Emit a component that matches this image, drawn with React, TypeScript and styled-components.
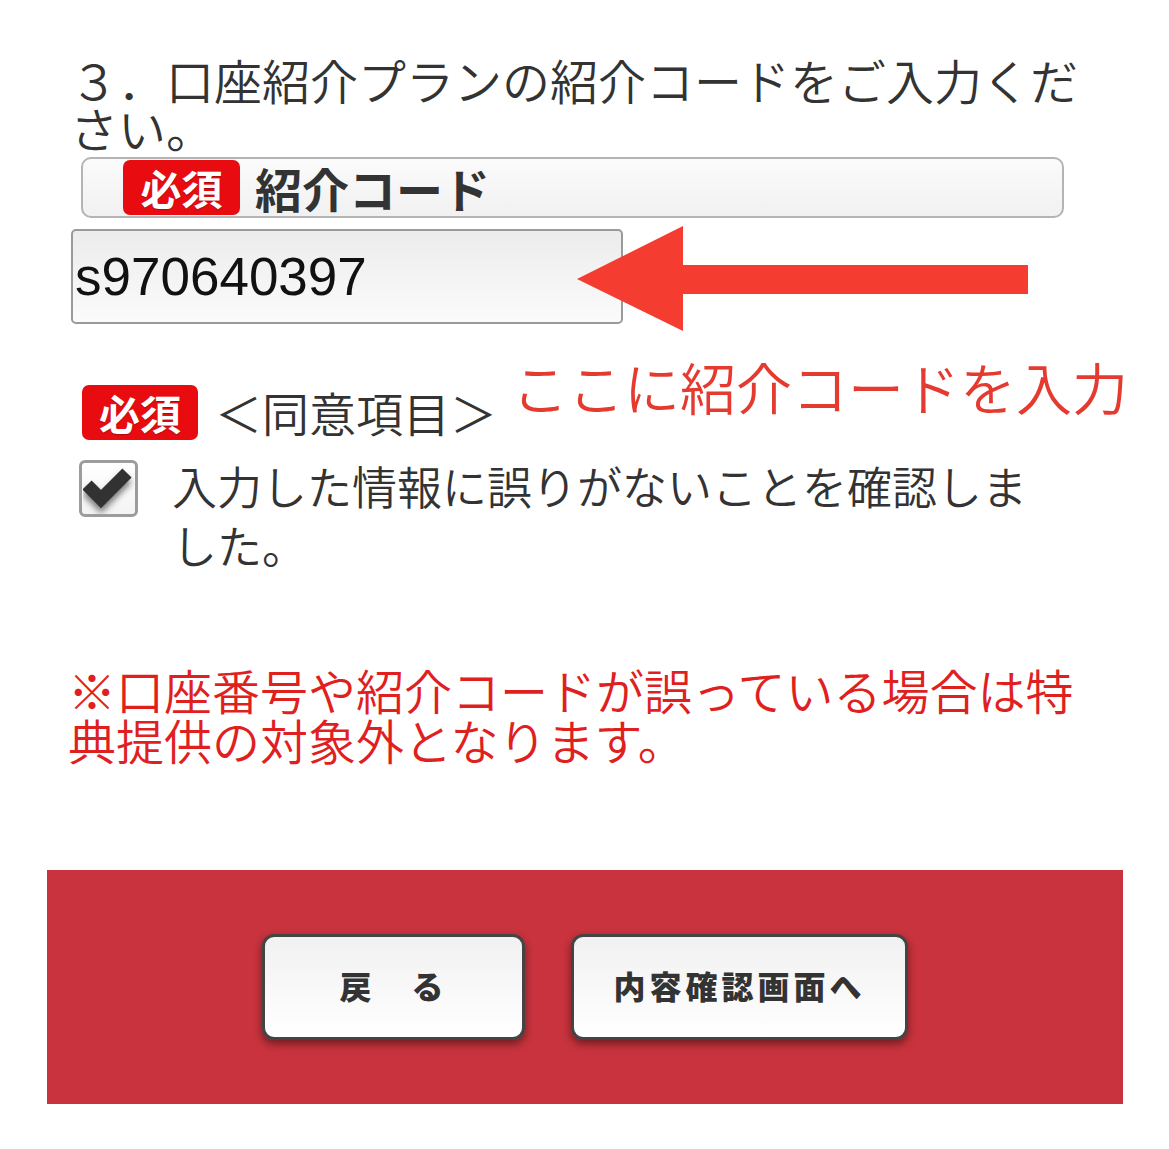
import React from "react";
import styled, { createGlobalStyle } from "styled-components";

const GlobalStyle = createGlobalStyle`
  html, body {
    margin: 0;
    padding: 0;
    background: #ffffff;
  }
  body {
    font-family: "Noto Sans CJK JP", "Noto Sans", sans-serif;
    color: #333333;
  }
`;

const Page = styled.div`
  width: 1169px;
  min-height: 1149px;
  background: #ffffff;
  overflow: hidden;
`;

const Content = styled.div`
  padding: 55px 0 0 70px;
`;

const Heading = styled.h2`
  margin: 0;
  width: 1030px;
  font-size: 48px;
  line-height: 48px;
  font-weight: 350;
  color: #333333;
`;

const LabelBox = styled.div`
  box-sizing: border-box;
  margin: 6px 0 0 11px;
  width: 983px;
  height: 61px;
  border: 2px solid #b4b4b4;
  border-radius: 10px;
  background: linear-gradient(#fbfbfb, #f1f1f1);
  display: flex;
  align-items: center;
  padding-left: 40px;
  gap: 15px;
`;

const Badge = styled.span<{ $w: number }>`
  box-sizing: border-box;
  width: ${(p) => p.$w}px;
  height: 55px;
  border-radius: 7px;
  background: #e80c10;
  color: #ffffff;
  font-size: 41px;
  font-weight: 700;
  line-height: 55px;
  text-align: center;
  text-shadow: 0 1px 1px rgba(0, 0, 0, 0.25);
  flex: none;
`;

const LabelText = styled.span`
  font-size: 47px;
  font-weight: 700;
  color: #333333;
  line-height: 1;
`;

const InputRow = styled.div`
  position: relative;
  margin-top: 11px;
  height: 95px;
`;

const CodeInput = styled.div`
  box-sizing: border-box;
  margin-left: 1px;
  width: 552px;
  height: 95px;
  border: 2px solid #9a9a9a;
  border-radius: 5px;
  background: linear-gradient(#ececec, #fbfbfb);
  display: flex;
  align-items: center;
  padding-left: 2px;
  font-family: "Liberation Sans", Arial, sans-serif;
  font-size: 53px;
  color: #111111;
`;

const Arrow = styled.svg`
  position: absolute;
  left: 507px;
  top: -3px;
`;

const AgreeRow = styled.div`
  position: relative;
  margin-top: 61px;
  margin-left: 12px;
  display: flex;
  align-items: center;
  gap: 17px;
  height: 55px;
`;

const AgreeTitle = styled.span`
  font-size: 47px;
  font-weight: 350;
  line-height: 1;
  color: #333333;
  margin-top: -3px;
`;

const Annotation = styled.div`
  position: absolute;
  left: 430px;
  top: -27px;
  font-size: 56px;
  font-weight: 350;
  line-height: 56px;
  color: #e53a2f;
  white-space: nowrap;
`;

const CheckRow = styled.div`
  margin-top: 20px;
  margin-left: 9px;
  display: flex;
  align-items: flex-start;
  gap: 34px;
`;

const CheckBox = styled.div`
  box-sizing: border-box;
  width: 59px;
  height: 57px;
  border: 3px solid #9c9c9c;
  border-radius: 6px;
  background: linear-gradient(#ffffff, #f4f4f4);
  display: flex;
  align-items: center;
  justify-content: center;
  flex: none;
`;

const CheckText = styled.div`
  width: 880px;
  margin-top: -4px;
  font-size: 45px;
  font-weight: 350;
  line-height: 59px;
  color: #333333;
`;

const Warning = styled.p`
  margin: 90px 0 0 -2px;
  width: 1030px;
  font-size: 48px;
  font-weight: 350;
  line-height: 50px;
  color: #e01f1f;
`;

const Footer = styled.div`
  margin: 106px 0 0 47px;
  width: 1076px;
  height: 234px;
  background: #c9333d;
  display: flex;
  align-items: center;
  justify-content: center;
  gap: 46px;
`;

const Button = styled.button<{ $w: number }>`
  box-sizing: border-box;
  width: ${(p) => p.$w}px;
  height: 106px;
  border: 3px solid #444444;
  border-radius: 12px;
  background: linear-gradient(#f1f1f1, #ffffff);
  box-shadow: 0 4px 9px rgba(0, 0, 0, 0.45);
  font-family: "Noto Sans CJK JP", sans-serif;
  font-size: 32px;
  font-weight: 900;
  letter-spacing: 4px;
  color: #333333;
  padding: 0 0 4px 0;
  display: flex;
  align-items: center;
  justify-content: center;
`;

export default function App() {
  return (
    <Page>
      <GlobalStyle />
      <Content>
        <Heading>３．口座紹介プランの紹介コードをご入力ください。</Heading>
        <LabelBox>
          <Badge $w={117}>必須</Badge>
          <LabelText>紹介コード</LabelText>
        </LabelBox>
        <InputRow>
          <CodeInput>s970640397</CodeInput>
          <Arrow width="452" height="106" viewBox="0 0 452 106">
            <polygon
              points="0,53 106,0 106,39 451,39 451,68 106,68 106,105"
              fill="#f53c30"
            />
          </Arrow>
        </InputRow>
        <AgreeRow>
          <Badge $w={116}>必須</Badge>
          <AgreeTitle>＜同意項目＞</AgreeTitle>
          <Annotation>ここに紹介コードを入力</Annotation>
        </AgreeRow>
        <CheckRow>
          <CheckBox>
            <svg width="52" height="50" viewBox="0 0 52 50">
              <defs>
                <filter id="sh" x="-30%" y="-30%" width="160%" height="190%">
                  <feDropShadow dx="0" dy="5" stdDeviation="3" floodColor="#000" floodOpacity="0.5" />
                </filter>
              </defs>
              <polyline
                points="4,21 18,35 44,9"
                fill="none"
                stroke="#333333"
                strokeWidth="13"
                strokeLinejoin="miter"
                filter="url(#sh)"
              />
            </svg>
          </CheckBox>
          <CheckText>入力した情報に誤りがないことを確認しました。</CheckText>
        </CheckRow>
        <Warning>※口座番号や紹介コードが誤っている場合は特典提供の対象外となります。</Warning>
      </Content>
      <Footer>
        <Button $w={263}>戻　る</Button>
        <Button $w={337}>内容確認画面へ</Button>
      </Footer>
    </Page>
  );
}
